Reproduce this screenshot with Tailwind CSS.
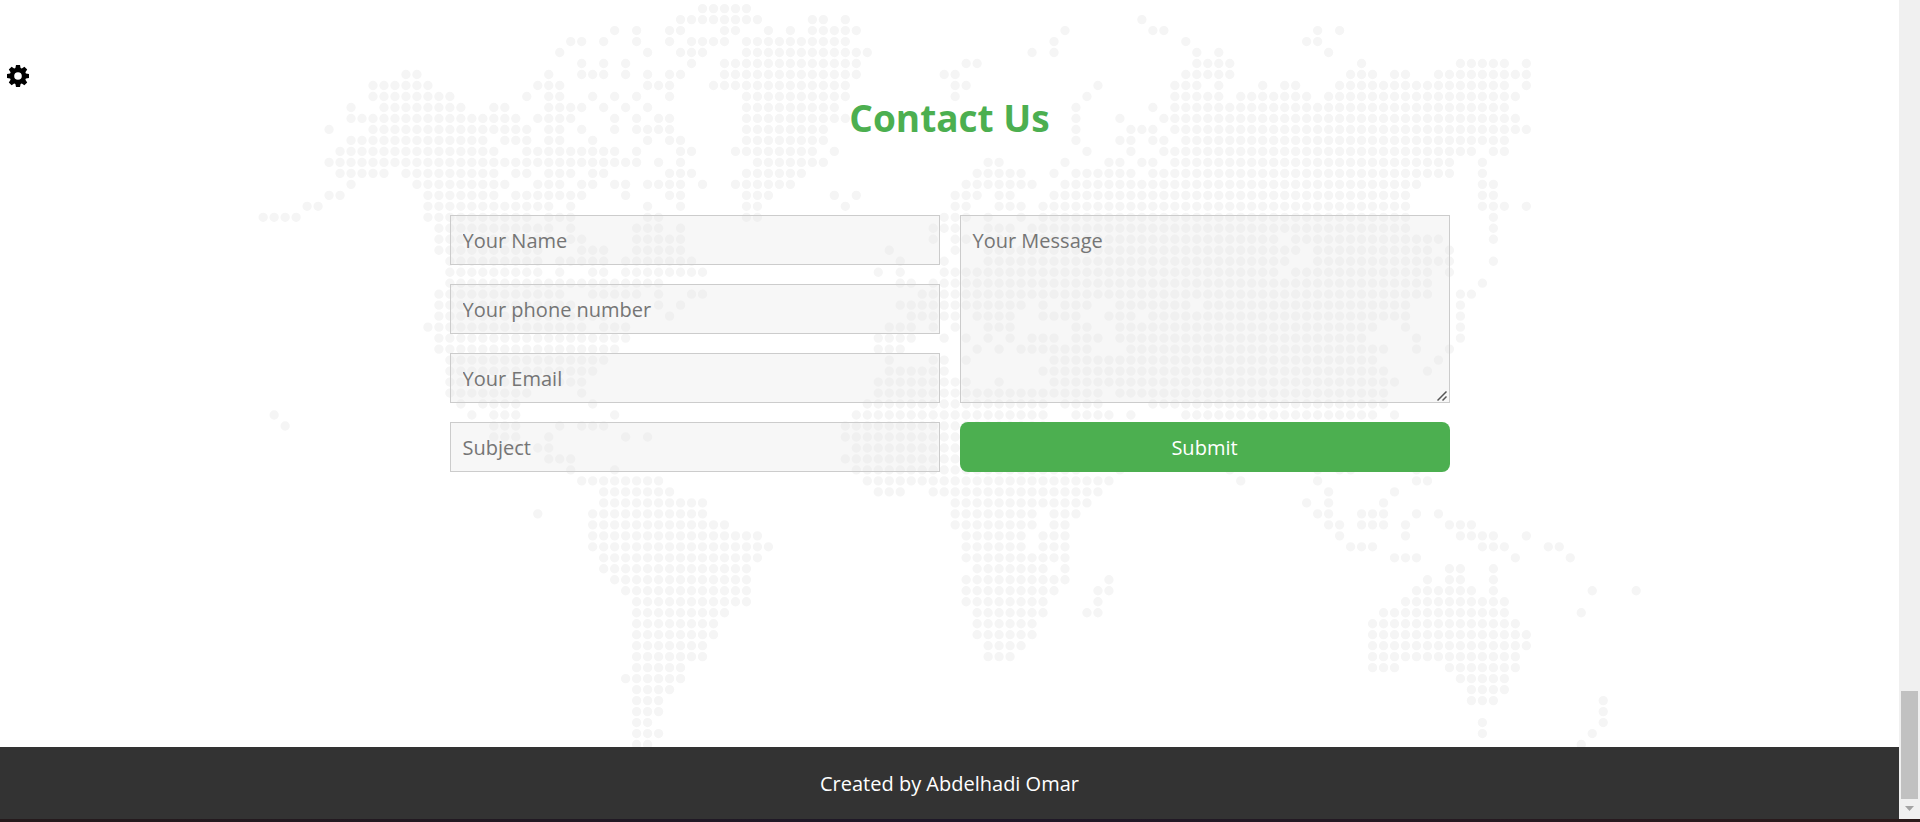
<!DOCTYPE html>
<html lang="en">
<head>
<meta charset="utf-8">
<meta name="viewport" content="width=device-width, initial-scale=1">
<title>Contact Us</title>
<script src="https://cdn.jsdelivr.net/npm/@tailwindcss/browser@4"></script>
</head>
<body class="h-screen overflow-hidden bg-white font-['Open_Sans','Noto_Sans',sans-serif] text-xl">
<div class="flex h-full flex-col">
  <div class="flex min-h-0 flex-1">
    <div class="relative flex min-w-0 flex-1 flex-col">
      <button type="button" aria-label="Settings" class="absolute left-[7px] top-[65px] z-10 size-[22px] text-black">
        <svg viewBox="0 0 22 22" class="size-full" fill="currentColor" aria-hidden="true">
          <path fill-rule="evenodd" d="M9 0h4l.6 3.100 1.200.5L17.400 1.800l2.800 2.800-1.800 2.600.5 1.200L22 9v4l-3.100.6-.5 1.200 1.800 2.600-2.800 2.800-2.600-1.800-1.200.5L13 22H9l-.6-3.100-1.200-.5-2.600 1.800-2.800-2.800 1.800-2.600-.5-1.200L0 13V9l3.100-.6.5-1.200L1.800 4.600l2.800-2.800 2.600 1.800 1.200-.5zM11 7.200a3.800 3.800 0 1 0 0 7.600 3.800 3.800 0 0 0 0-7.600z"/>
        </svg>
      </button>

      <main class="relative min-h-0 flex-1 overflow-hidden">
        <svg id="map" class="absolute left-1/2 top-0 h-[747px] w-[1384px] -translate-x-1/2 text-[#f5f5f5]" viewBox="-0.47 -0.783 126 68.01" preserveAspectRatio="xMidYMin slice" aria-hidden="true">
          <path id="dots" fill="none" stroke="currentColor" stroke-width="0.85" stroke-linecap="round" stroke-dasharray="0 1"/>
        </svg>
        <section class="relative mx-auto max-w-[1000px] pt-[91px]">
          <h1 class="text-center text-[37px] leading-[54px] font-bold text-[#4caf50]">Contact Us</h1>
          <form class="mt-[70px] grid grid-cols-2 gap-5" onsubmit="return false">
            <div class="flex flex-col gap-[19px]">
              <input type="text" aria-label="Your Name" placeholder="Your Name" class="h-[50px] w-full border border-[#ccc] bg-[#e4e4e4]/30 px-3 outline-none placeholder:text-[#757575]">
              <input type="tel" aria-label="Your phone number" placeholder="Your phone number" class="h-[50px] w-full border border-[#ccc] bg-[#e4e4e4]/30 px-3 outline-none placeholder:text-[#757575]">
              <input type="email" aria-label="Your Email" placeholder="Your Email" class="h-[50px] w-full border border-[#ccc] bg-[#e4e4e4]/30 px-3 outline-none placeholder:text-[#757575]">
              <input type="text" aria-label="Subject" placeholder="Subject" class="h-[50px] w-full border border-[#ccc] bg-[#e4e4e4]/30 px-3 outline-none placeholder:text-[#757575]">
            </div>
            <div class="flex flex-col gap-[19px]">
              <div class="relative flex flex-1">
                <textarea aria-label="Your Message" placeholder="Your Message" class="block min-h-0 w-full flex-1 resize border border-[#ccc] bg-[#e4e4e4]/30 px-3 py-[11px] leading-[27px] outline-none placeholder:text-[#757575] [&::-webkit-resizer]:hidden"></textarea>
                <svg class="pointer-events-none absolute right-[3px] bottom-0.5 size-[10px] text-[#555]" viewBox="0 0 10 10" fill="none" stroke="currentColor" stroke-width="1.500" aria-hidden="true"><path d="M.5 9.500l9-9M5.500 9.500l4-4"/></svg>
              </div>
              <button type="submit" class="h-[50px] w-full rounded-lg bg-[#4caf50] pt-0.5 text-white">Submit</button>
            </div>
          </form>
        </section>
      </main>

      <footer class="bg-[#333] pt-[23px] pb-[21px] text-center leading-7 text-white">Created by Abdelhadi Omar</footer>
    </div>

    <div class="flex w-[21px] flex-col bg-[#f0f0f0] px-0.5" aria-hidden="true">
      <div class="mt-auto h-[108px] bg-[#c1c1c1]"></div>
      <svg class="mx-auto mt-[7px] mb-2 h-[5px] w-[9px] text-[#a3a3a3]" viewBox="0 0 9 5" fill="currentColor"><path d="M0 0h9L4.500 5z"/></svg>
    </div>
  </div>
  <div class="h-[3px] bg-linear-to-r from-[#251a1c] via-[#1e1828] to-[#2b1a1a]"></div>
</div>

<script>
  // Dotted world map: one entry per row, each listing the runs of filled columns.
  const rows = [
    "40-44",
    "38-45 50-51 53 80",
    "32 34 37-38 42-43 46 48 50-54 73 81-82 96 98",
    "28-29 31 34 37 39-42 44-53 72 84 95-96",
    "27 35 38-40 44-55 70 72 85 87 97",
    "29 31 33 39 42-54 64-65 85-88 100 109-113 115",
    "13-14 26 29-31 33 35 37-38 42-54 62-63 84-88 99-101 103-104 107-115",
    "10-15 25-27 35-37 41-53 63-64 76 83-85 87 91 93-94 98-113 115",
    "10-17 24 26-27 30 32 34 37 44-53 63 75 83-87 89-95 97-114",
    "8 11-18 21-22 26-29 31 33 35 44-52 74 81 83-113",
    "8-23 25-28 32 34 36-37 44-53 74 78 82-114",
    "6 10-24 26-27 29 32 34-37 44-51 74 79-81 83-115",
    "8-20 22-24 26-27 30 35 37-38 44-51 74 78-79 81-82 84-113",
    "7-21 24-32 34 38-39 43-50 52 75 79 82-110 112-113",
    "6-34 36 38 45-51 66-67 73 77-78 80-81 83-108 111",
    "7-11 13-21 23-24 26-28 30-31 37-39 44-49 65-69 72 74-79 81-108 111",
    "8 14-22 25-27 29-30 32-33 35-38 40 43-48 64-70 73-105 111-112",
    "6-7 15-21 23-29 33 37-38 44-46 52 54 63-65 67-68 72-104 111-112",
    "4-5 15-26 28 35 38 44-45 53 63-64 67-69 71-104 111-113 115",
    "0-3 15-24 26-28 35-36 44-45 62-64 66 69 71-104 112",
    "16-26 28 34-36 38 61-63 66-68 70-104 112",
    "16-26 28-29 34-38 61 63-64 66-68 70-92 94-107 112",
    "16-25 29-31 34-38 57 63 66-94 96-106 108",
    "17-25 27-31 33-39 58 62 66-93 96-108 112",
    "17-25 27 30-31 33-40 56 58 62-92 94-106 108",
    "17-36 58-59 61-106 111",
    "16-27 30-34 36 39-40 60-106 109-110",
    "16-28 36 38 58-69 71 73-75 78-84 86-104 109",
    "16-31 37 59-63 65-68 71-74 77-79 81-104 109",
    "15-29 31-33 57-59 61 63 66-68 74-75 78-101 104 109",
    "16-33 56-59 62 64 66 68 70-72 74-76 78-100 105 109",
    "16-32 56-58 65 67 69-75 79-102 105 108",
    "17-31 57 61-62 64 72-101 107",
    "17-30 57-62 71-102 106",
    "17-29 56-64 67 72-103",
    "17-24 29 56-76 78-102",
    "18 20-23 30 55-71 73-76 81-102",
    "1 19 21-23 32 54-71 74-77 79 84-101 103",
    "2 21-23 27 29-31 53-71",
    "21-23 26 33 35 53-71",
    "22-23 25-26 54-71",
    "26-28 53-71",
    "28 32 54-74 78 88 96 98-99 105",
    "29-36 55-77 89 96 105-106",
    "31-37 56-58 61-76 97 103",
    "31-40 63-75 95 97 102",
    "25 30-40 63-70 72-74 96-97 100-102 105 107",
    "30-42 63-70 72-73 97-98 100-102 104 108-110",
    "30-45 64-69 71-73 98 104 109-112 115",
    "30-46 64-69 71-73 99-101 111-113 117-118",
    "31-45 64-73 103-105 114 119",
    "31-44 65-71 73 108-109 112",
    "32-44 64-73 77 106 108-109 112",
    "33-44 64-72 76-77 105-110 112 121 125",
    "34-44 64-71 76 104-113",
    "34-42 65-71 75-76 102-113 120",
    "34-41 65-70 101-114",
    "34-41 65-70 101-115",
    "34-40 66-69 101-115",
    "34-40 66-68 101-114",
    "34-38 101-103 108-114",
    "33-38 109-113",
    "34-37 110-113",
    "34-36 110-112 122",
    "34-36 122",
    "34-35 111 122",
    "34-36 111 121",
    "34-35 120"
  ];
  document.getElementById("dots").setAttribute("d", rows.map((row, y) =>
    row.split(" ").map(run => {
      const [a, b = a] = run.split("-").map(Number);
      return `M${a} ${y}h${b - a + 0.01}`;
    }).join("")
  ).join(""));
</script>
</body>
</html>
